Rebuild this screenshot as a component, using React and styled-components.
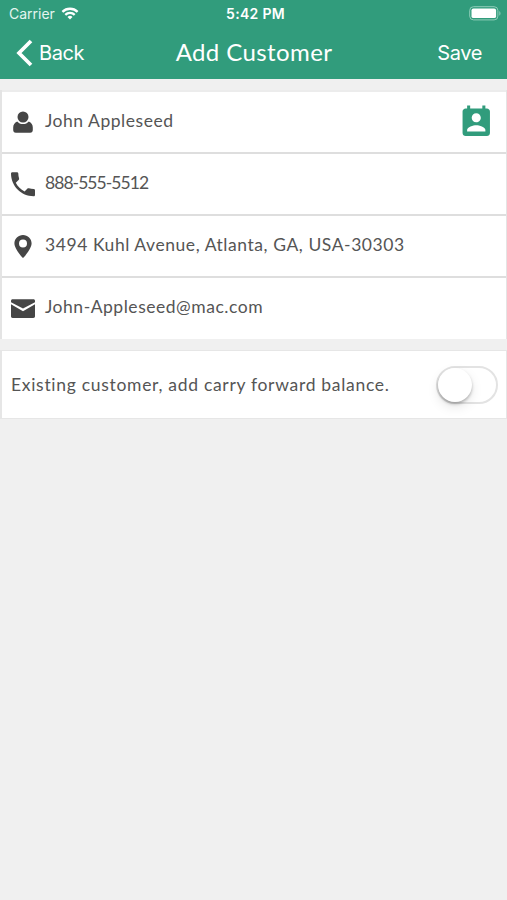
import React, { useState } from 'react';
import styled, { createGlobalStyle } from 'styled-components';

const green = '#319c7c';
const ink = '#454545';

const contactFields = [
    { id: 'name', value: 'John Appleseed', spacing: 0.53, picker: true },
    { id: 'phone', value: '888-555-5512', spacing: -0.95 },
    { id: 'address', value: '3494 Kuhl Avenue, Atlanta, GA, USA-30303', spacing: 0.56 },
    { id: 'email', value: 'John-Appleseed@mac.com', spacing: 0.53 },
];

const fieldIcons = {
    name: (
        <>
            <circle cx="13" cy="8" r="5.5" />
            <path d="M7.2 12.4C8.6 14 10.5 15 13 15s4.4-1 5.8-2.6c2.6 1.1 4 3.2 4 6.1v2.6c0 1.7-.9 2.6-2.6 2.6H5.8c-1.7 0-2.6-.9-2.6-2.6v-2.6c0-2.9 1.4-5 4-6.1z" />
        </>
    ),
    phone: (
        <path d="M5.8 11.7c1.9 3.8 5 6.8 8.8 8.8l2.9-2.9c.4-.4.9-.5 1.4-.3 1.5.5 3.1.8 4.8.8.7 0 1.3.6 1.3 1.3v4.6c0 .7-.6 1.3-1.3 1.3C11.2 25.3 1 15.1 1 2.6 1 1.9 1.6 1.3 2.3 1.3H7c.7 0 1.3.6 1.3 1.3 0 1.7.3 3.3.8 4.8.1.5 0 1-.3 1.4l-3 2.9z" />
    ),
    address: (
        <path
            fillRule="evenodd"
            d="M13 1.9c-4.8 0-8.6 3.7-8.6 8.4 0 6.1 8.6 14.8 8.6 14.8s8.6-8.7 8.6-14.8c0-4.7-3.8-8.4-8.6-8.4zm0 4.7a4 4 0 1 1 0 8 4 4 0 0 1 0-8z"
        />
    ),
    email: (
        <>
            <path d="M2.7 4.3h20.6c1.1 0 1.7.6 1.7 1.6v1.3l-12 6.3L1 7.2V5.9c0-1 .6-1.6 1.7-1.6z" />
            <path d="M1 9.3l12 6.9 12-6.9v12c0 1-.6 1.6-1.7 1.6H2.7c-1.1 0-1.7-.6-1.7-1.6z" />
        </>
    ),
};

const App = () => {
    const [carryForward, setCarryForward] = useState(false);

    return (
        <Screen>
            <GlobalStyle />
            <Header>
                <StatusBar>
                    <Carrier>
                        Carrier
                        <svg width="18" height="13" viewBox="0 0 18 13" fill="none" stroke="#fff" strokeWidth="2.3">
                            <path d="M1.4 4.9a10.8 10.8 0 0 1 15.2 0" />
                            <path d="M4.3 7.9a6.7 6.7 0 0 1 9.4 0" />
                            <path d="M9 12.6 6.5 10a3.5 3.5 0 0 1 5 0z" fill="#fff" stroke="none" />
                        </svg>
                    </Carrier>
                    <Clock>5:42 PM</Clock>
                    <BatteryArea>
                        <svg width="33" height="15" viewBox="0 0 33 15">
                            <rect x="0.7" y="0.7" width="28.2" height="13.2" rx="3.8" fill="none" stroke="#8fcdb9" />
                            <rect x="2.5" y="2.5" width="24.6" height="9.6" rx="1.9" fill="#fff" />
                            <path d="M30.3 5v4.8c1.6-.8 1.6-4 0-4.8z" fill="#8fcdb9" />
                        </svg>
                    </BatteryArea>
                </StatusBar>
                <NavBar>
                    <BackButton>
                        <svg width="17" height="28" viewBox="0 0 17 28" fill="none" stroke="#fff" strokeWidth="3.7">
                            <path d="M15 2 3 14l12 12" />
                        </svg>
                        Back
                    </BackButton>
                    <Title>Add Customer</Title>
                    <SaveButton>Save</SaveButton>
                </NavBar>
            </Header>

            <FieldList>
                {contactFields.map((field) => (
                    <FieldRow key={field.id}>
                        <svg width="26" height="26" viewBox="0 0 26 26" fill={ink}>
                            {fieldIcons[field.id]}
                        </svg>
                        <FieldText $spacing={field.spacing}>{field.value}</FieldText>
                        {field.picker && (
                            <PickerButton aria-label="Choose contact">
                                <svg width="36.5" height="36.5" viewBox="0 0 24 24" fill={green}>
                                    <path d="M19 3h-1V1h-2v2H8V1H6v2H5c-1.11 0-2 .9-2 2v14c0 1.1.89 2 2 2h14c1.1 0 2-.9 2-2V5c0-1.1-.9-2-2-2zm-7 3c1.66 0 3 1.34 3 3s-1.34 3-3 3-3-1.34-3-3 1.34-3 3-3zm6 12H6v-1c0-2 4-3.1 6-3.1s6 1.1 6 3.1v1z" />
                                </svg>
                            </PickerButton>
                        )}
                    </FieldRow>
                ))}
            </FieldList>

            <BalancePanel>
                <FieldText $spacing={0.7}>Existing customer, add carry forward balance.</FieldText>
                <Switch
                    role="switch"
                    aria-label="Carry forward balance"
                    aria-checked={carryForward}
                    $on={carryForward}
                    onClick={() => setCarryForward(!carryForward)}
                >
                    <Knob />
                </Switch>
            </BalancePanel>
        </Screen>
    );
};

export default App;

const GlobalStyle = createGlobalStyle`
  * {
    box-sizing: border-box;
  }

  body {
    margin: 0;
    background: #f0f0f0;
  }

  button {
    border: 0;
    padding: 0;
    background: none;
    color: inherit;
    font: inherit;
  }

  svg {
    display: block;
    flex: none;
  }
`;

const Screen = styled.div`
  width: 100%;
  min-height: 100vh;
  background: #f0f0f0;
  color: #555;
  font-family: Lato, 'Liberation Sans', sans-serif;
`;

const Header = styled.header`
  height: 79px;
  background: ${green};
  color: #fff;
`;

const StatusBar = styled.div`
  display: grid;
  grid-template-columns: 1fr auto 1fr;
  align-items: center;
  height: 27px;
  padding: 0 5px 0 9px;
  font-family: Inter, 'Liberation Sans', sans-serif;
  font-size: 14px;
`;

const Carrier = styled.div`
  display: flex;
  align-items: center;
  gap: 6px;
  color: #e4f5ef;
`;

const Clock = styled.div`
  font-weight: 600;
  letter-spacing: 0.3px;
`;

const BatteryArea = styled.div`
  display: flex;
  justify-content: flex-end;
`;

const NavBar = styled.nav`
  display: grid;
  grid-template-columns: 1fr auto 1fr;
  align-items: center;
  height: 52px;
  padding: 0 25px 0 26px;
  font-family: Inter, 'Liberation Sans', sans-serif;
  font-size: 20px;
`;

const BackButton = styled.button`
  display: flex;
  align-items: center;
  gap: 6px;
  margin-left: -10px;
  letter-spacing: -0.4px;
`;

const SaveButton = styled.button`
  justify-self: end;
  letter-spacing: -0.4px;
`;

const Title = styled.h1`
  margin: 0;
  padding-bottom: 3px;
  font-family: Lato, 'Liberation Sans', sans-serif;
  font-size: 24px;
  font-weight: 400;
  letter-spacing: 0.4px;
`;

const FieldList = styled.section`
  margin-top: 11px;
  padding-bottom: 1px;
  border-left: 2px solid #e4e4e4;
  border-right: 1px solid #e4e4e4;
  background: #fff;
`;

const FieldRow = styled.div`
  display: flex;
  align-items: center;
  height: 62px;
  padding: 0 12px 0 8px;
  border-top: 2px solid #dedede;

  &:first-child {
    border-top-color: #ececec;
  }
`;

const FieldText = styled.span`
  flex: 1;
  font-size: 17.5px;
  line-height: 24px;
  white-space: nowrap;
  letter-spacing: ${(props) => props.$spacing}px;

  svg + & {
    margin-left: 9px;
    padding-bottom: 2px;
  }
`;

const PickerButton = styled.button`
  flex: none;
`;

const BalancePanel = styled.section`
  display: flex;
  align-items: center;
  height: 69px;
  margin-top: 11px;
  padding: 0 8px 0 9px;
  border: 1px solid #e6e6e6;
  border-left-width: 2px;
  background: #fff;
`;

const Switch = styled.button`
  display: flex;
  align-items: center;
  justify-content: ${(props) => (props.$on ? 'flex-end' : 'flex-start')};
  width: 62px;
  height: 38px;
  border: 2px solid #e3e3e3;
  border-radius: 19px;
  background: ${(props) => (props.$on ? green : '#fff')};
`;

const Knob = styled.span`
  width: 34px;
  height: 34px;
  border-radius: 50%;
  background: #fff;
  box-shadow: 0 2px 3px rgba(0, 0, 0, 0.25), 0 5px 12px rgba(0, 0, 0, 0.1);
`;
